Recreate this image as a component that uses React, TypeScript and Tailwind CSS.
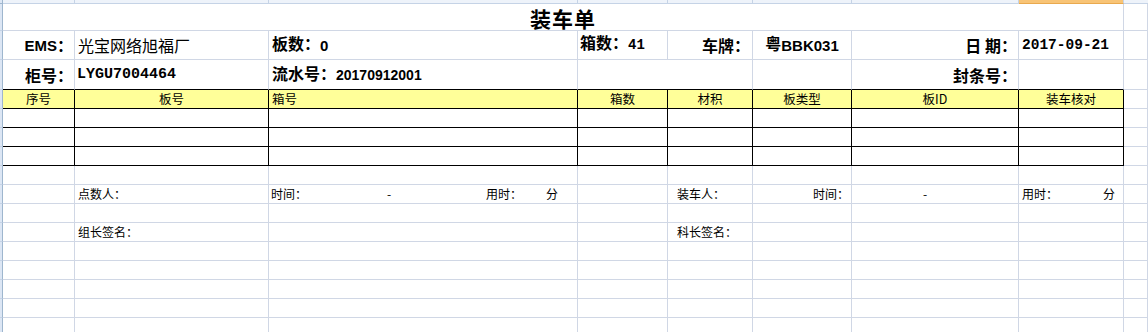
import type { ReactNode } from 'react'

// column template: row-header edge, A..H, and the spill column on the right
const COLS = 'grid grid-cols-[3px_72px_194px_309px_90px_85px_99px_167px_105px_1fr]'

const CJK = "font-['Noto_Sans_CJK_SC',sans-serif]"
const SANS = "font-['Liberation_Sans','Noto_Sans_CJK_SC',sans-serif]"
const MONO = "font-['Liberation_Mono','Noto_Sans_CJK_SC',monospace]"

function Edge() {
  return <div className="bg-[#dce6f4] border-r border-b border-r-[#9eb6ce] border-b-[#c5d3e6]" />
}

function Cell({ className = '', children }: { className?: string; children?: ReactNode }) {
  return (
    <div className={`flex items-center overflow-hidden whitespace-nowrap border-r border-b leading-none text-black ${className}`}>
      {children}
    </div>
  )
}

const grid = 'border-[#d0d7e5]'
const black = 'border-black'

function BlankRow() {
  return (
    <div className={`${COLS} h-[19px]`}>
      <Edge />
      {Array.from({ length: 9 }).map((_, i) => (
        <Cell key={i} className={grid} />
      ))}
    </div>
  )
}

function TableRow({ header = false }: { header?: boolean }) {
  const labels = ['序号', '板号', '箱号', '箱数', '材积', '板类型', '板ID', '装车核对']
  return (
    <div className={`${COLS} h-[19px]`}>
      <Edge />
      {labels.map((label, i) => (
        <Cell
          key={label}
          className={`${black} ${header ? 'bg-[#ffff99]' : 'bg-white'} ${CJK} text-[12.5px] ${
            i === 2 ? 'justify-start pl-[3px]' : 'justify-center'
          }`}
        >
          {header ? label : null}
        </Cell>
      ))}
      <Cell className={grid} />
    </div>
  )
}

export default function App() {
  return (
    <div className="w-[1148px] h-[332px] overflow-hidden bg-white">
      {/* column header bottom edge */}
      <div className={`${COLS} h-[4px]`}>
        <div className="bg-[#dce6f4] border-r border-b border-[#9eb6ce]" />
        {Array.from({ length: 7 }).map((_, i) => (
          <div key={i} className="bg-[#eef3fa] border-r border-b border-[#c5d3e6]" />
        ))}
        <div className="bg-[#f8c476] border-r border-b border-r-[#c5d3e6] border-b-[#e9a94e]" />
        <div className="bg-[#eef3fa] border-b border-[#c5d3e6]" />
      </div>

      {/* title */}
      <div className={`${COLS} h-[27px]`}>
        <Edge />
        <Cell className={`${grid} col-span-8 justify-center pt-[2px] ${CJK} text-[21px] font-bold tracking-[1px]`}>
          装车单
        </Cell>
        <Cell className={grid} />
      </div>

      {/* EMS / 板数 / 箱数 / 车牌 / 日期 */}
      <div className={`${COLS} h-[29px]`}>
        <Edge />
        <Cell className={`${grid} justify-end pr-[1px] ${SANS} text-[15px] font-bold`}>
          EMS<span className={`${CJK} text-[16px]`}>：</span>
        </Cell>
        <Cell className={`${grid} pl-[3px] ${CJK} text-[16px]`}>光宝网络旭福厂</Cell>
        <Cell className={`${grid} pl-[3px] ${SANS} text-[16px] font-bold`}>
          板数：<span className="text-[15px]">0</span>
        </Cell>
        <Cell className={`${grid} pl-[2px] ${MONO} text-[16px] font-bold`}>
          箱数：<span className="text-[14px]">41</span>
        </Cell>
        <Cell className={`${grid} justify-end pr-[2px] ${CJK} text-[16px] font-bold`}>车牌：</Cell>
        <Cell className={`${grid} justify-center ${SANS} text-[15px] font-bold`}>
          <span className="text-[16px]">粤</span>BBK031
        </Cell>
        <Cell className={`${grid} justify-end pr-[1px] ${CJK} text-[16px] font-bold`}>日 期：</Cell>
        <Cell className={`${grid} pl-[3px] ${MONO} text-[14.5px] font-bold`}>2017-09-21</Cell>
        <Cell className={grid} />
      </div>

      {/* 柜号 / 流水号 / 封条号 */}
      <div className={`${COLS} h-[30px]`}>
        <Edge />
        <Cell className={`border-r-[#d0d7e5] border-b-black justify-end pr-[1px] ${CJK} text-[16px] font-bold`}>
          柜号：
        </Cell>
        <Cell className={`border-r-[#d0d7e5] border-b-black pl-[2px] ${MONO} text-[15px] font-bold`}>
          LYGU7004464
        </Cell>
        <Cell className={`border-r-[#d0d7e5] border-b-black pl-[3px] ${SANS} text-[16px] font-bold`}>
          流水号：<span className="text-[14px]">20170912001</span>
        </Cell>
        <Cell className="col-span-2 border-r-[#d0d7e5] border-b-black" />
        <Cell className="border-r-[#d0d7e5] border-b-black" />
        <Cell className={`border-r-[#d0d7e5] border-b-black justify-end pr-[1px] ${CJK} text-[16px] font-bold`}>
          封条号：
        </Cell>
        <Cell className="border-r-[#d0d7e5] border-b-black" />
        <Cell className={grid} />
      </div>

      <TableRow header />
      <TableRow />
      <TableRow />
      <TableRow />

      <BlankRow />

      {/* 点数人 / 装车人 */}
      <div className={`${COLS} h-[19px] ${CJK} text-[12px]`}>
        <Edge />
        <Cell className={grid} />
        <Cell className={`${grid} pl-[3px]`}>点数人：</Cell>
        <Cell className={`${grid} pl-[2px]`}>
          <span className="w-[116px]">时间：</span>
          <span className="w-[99px]">-</span>
          <span className="w-[60px]">用时：</span>
          <span>分</span>
        </Cell>
        <Cell className={grid} />
        <Cell className={`${grid} pl-[9px]`}>装车人：</Cell>
        <Cell className={`${grid} justify-end pr-[2px]`}>时间：</Cell>
        <Cell className={`${grid} pl-[71px]`}>-</Cell>
        <Cell className={`${grid} pl-[3px]`}>
          <span className="w-[81px]">用时：</span>
          <span>分</span>
        </Cell>
        <Cell className={grid} />
      </div>

      <BlankRow />

      {/* 签名 */}
      <div className={`${COLS} h-[19px] ${CJK} text-[12px]`}>
        <Edge />
        <Cell className={grid} />
        <Cell className={`${grid} pl-[3px]`}>组长签名：</Cell>
        <Cell className={grid} />
        <Cell className={grid} />
        <Cell className={`${grid} pl-[9px]`}>科长签名：</Cell>
        <Cell className={grid} />
        <Cell className={grid} />
        <Cell className={grid} />
        <Cell className={grid} />
      </div>

      <BlankRow />
      <BlankRow />
      <BlankRow />
      <BlankRow />
      <BlankRow />
    </div>
  )
}
